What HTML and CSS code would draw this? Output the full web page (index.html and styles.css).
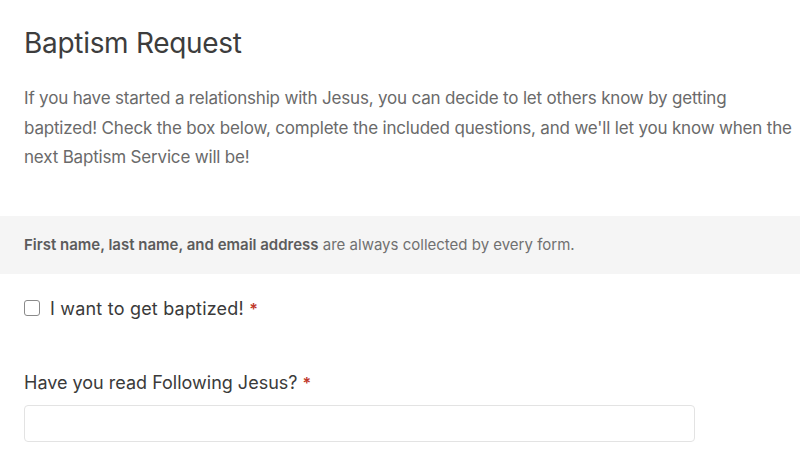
FILE: index.html
```html
<!DOCTYPE html>
<html>
<head>
<meta charset="utf-8">
<link rel="stylesheet" href="styles.css">
</head>
<body>
<div class="intro">
  <h1 class="title">Baptism Request</h1>
  <p class="desc">If you have started a relationship with Jesus, you can decide to let others know by getting baptized! Check the box below, complete the included questions, and we'll let you know when the next Baptism Service will be!</p>
</div>
<div class="notice"><p class="notice-text"><strong>First name, last name, and email address</strong> are always collected by every form.</p></div>
<div class="form">
  <label class="check-row"><span class="box"></span><span class="check-label">I want to get baptized! <span class="req">*</span></span></label>
  <div class="field">
    <div class="field-label">Have you read Following Jesus? <span class="req">*</span></div>
    <div class="input"></div>
  </div>
</div>
</body>
</html>
```

FILE: styles.css
```css
html, body {
  margin: 0;
  padding: 0;
  background: #fff;
  font-family: Inter, "Noto Sans", sans-serif;
}
.intro {
  padding: 24px 0 0 24px;
}
.title {
  margin: 0;
  font-size: 28px;
  line-height: 38px;
  font-weight: 400;
  color: #3d3d3d;
  letter-spacing: -0.3px;
}
.desc {
  margin: 22px 0 0;
  font-size: 17px;
  line-height: 29.5px;
  color: #6a6a6a;
  letter-spacing: -0.18px;
}
.notice {
  margin-top: 43px;
  background: #f5f5f5;
  height: 58px;
  display: flex;
  align-items: center;
  padding: 0 24px;
}
.notice-text {
  margin: 0;
  font-size: 15px;
  color: #707070;
}
.notice strong {
  font-weight: 600;
  color: #5c5c5c;
}
.form {
  padding: 0 24px;
}
.check-row {
  display: flex;
  align-items: center;
  gap: 10px;
  height: 69px;
}
.box {
  width: 14px;
  height: 14px;
  border: 1px solid #8a8a8a;
  border-radius: 3px;
  background: #fff;
}
.check-label {
  font-size: 18px;
  color: #3a3a3a;
  letter-spacing: 0.2px;
}
.req {
  color: #c0392b;
  font-weight: 600;
  font-size: 16px;
}
.field {
  margin-top: 28px;
}
.field-label {
  font-size: 18px;
  line-height: 24px;
  color: #3a3a3a;
}
.input {
  margin-top: 10px;
  width: 669px;
  height: 35px;
  border: 1px solid #e3e3e3;
  border-radius: 4px;
  background: #fff;
}
```
